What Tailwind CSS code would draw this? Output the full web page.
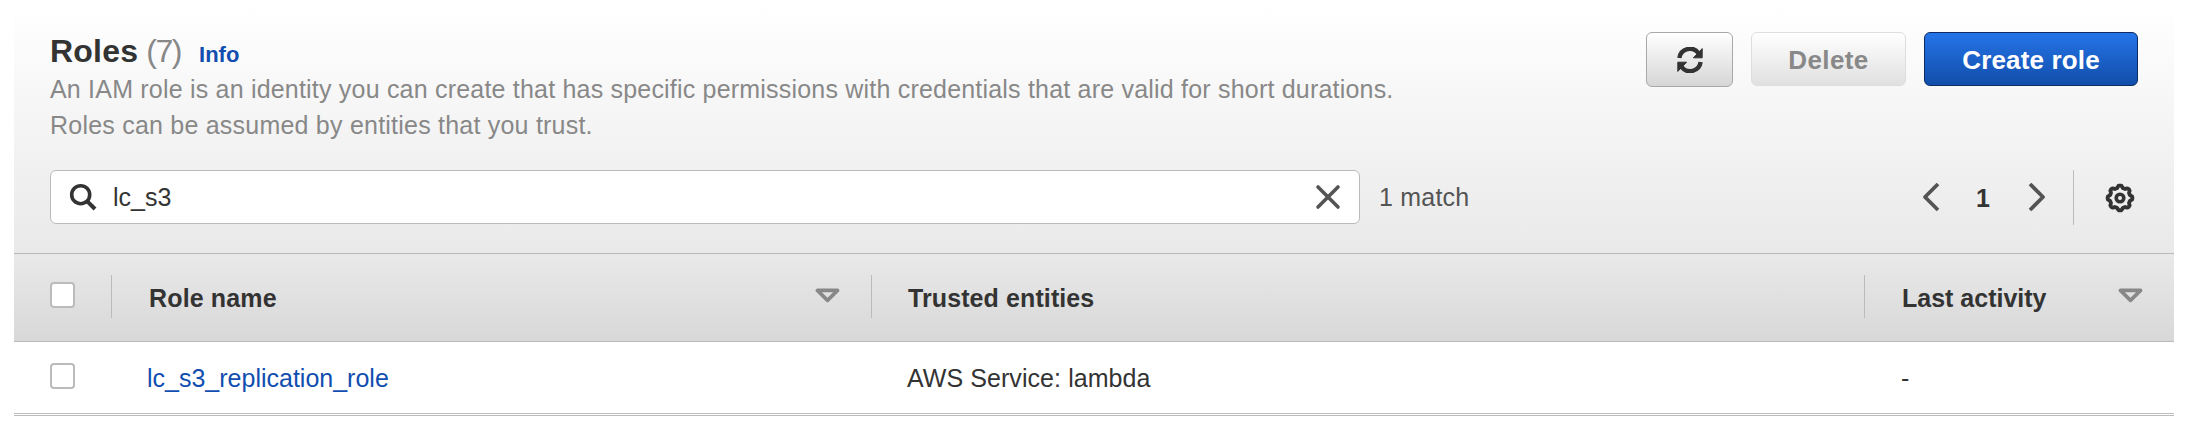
<!DOCTYPE html>
<html lang="en">
<head>
<meta charset="utf-8">
<title>Roles</title>
<script src="https://cdn.jsdelivr.net/npm/@tailwindcss/browser@4"></script>
</head>
<body class="bg-white font-['Liberation_Sans',Arial,sans-serif] text-[25px] leading-9 text-[#333] overflow-hidden">
<main class="mx-auto w-[2160px] mr-[12px] pt-1.5">

  <section class="h-[248px] border-b border-[#bababa] bg-linear-to-b from-white to-[#e9e9e9] flex flex-col">
    <div class="flex justify-between pl-9 pr-9 pt-[25px] h-[164px]">
      <div class="whitespace-nowrap">
        <h1 class="flex items-baseline h-10 text-[32px] leading-10">
          <span class="font-bold tracking-[0.2px]">Roles</span>
          <span class="ml-[8px] text-[#888] tracking-[-1.4px]">(7)</span>
          <a class="ml-[18px] text-[22px] font-bold text-[#114eb0]">Info</a>
        </h1>
        <p class="text-[#888] tracking-[0.2px]">An IAM role is an identity you can create that has specific permissions with credentials that are valid for short durations.</p>
        <p class="text-[#888] tracking-[0.22px]">Roles can be assumed by entities that you trust.</p>
      </div>
      <div class="flex items-start pt-px gap-[18px] font-bold text-[26px]">
        <button class="w-[87px] h-[55px] rounded-md border border-[#a8a8a8] bg-linear-to-b from-white to-[#d6d6d6] flex items-center justify-center" aria-label="Refresh">
          <svg width="26" height="26" viewBox="0 0 26 26" fill="none" stroke="#333" stroke-width="4.4">
            <path d="M2.4 11A10.6 10.6 0 0 1 21.5 6.2"/>
            <path d="M23.6 15A10.6 10.6 0 0 1 4.5 19.8"/>
            <path d="M25.2 1.6V10.8H16.4Z" fill="#333" stroke-width="1"/>
            <path d="M.8 24.4V15.2H9.6Z" fill="#333" stroke-width="1"/>
          </svg>
        </button>
        <button class="w-[155px] h-[54px] pt-px rounded-md border border-[#dedede] bg-linear-to-b from-white to-[#e0e0e0] text-[#888] tracking-[0.4px]">Delete</button>
        <button class="w-[214px] h-[54px] pt-px rounded-md border border-[#0c2c63] bg-linear-to-b from-[#2574e8] to-[#114eaa] text-white tracking-[0.15px]">Create role</button>
      </div>
    </div>
    <div class="flex items-center h-[55px] pl-9 pr-[39px]">
      <div class="w-[1310px] h-[54px] mb-px rounded-md border border-[#bbb] bg-white flex items-center pl-[18px] pr-[18px]">
        <svg width="28" height="28" viewBox="0 0 28 28" fill="none" stroke="#333"><circle cx="11.7" cy="11.7" r="9" stroke-width="3.6"/><path d="M17.8 17.8L26 26" stroke-width="4"/></svg>
        <span class="ml-[16px] flex-1">lc_s3</span>
        <svg width="26" height="26" viewBox="0 0 26 26" fill="none" stroke="#545454" stroke-width="3.6" stroke-linecap="round"><path d="M3 3L23 23M23 3L3 23"/></svg>
      </div>
      <span class="ml-[19px] mb-px tracking-[0.2px] text-[#545454]">1 match</span>
      <div class="ml-auto flex items-center">
        <svg width="18" height="30" viewBox="0 0 18 30" fill="none" stroke="#545454" stroke-width="3.8" stroke-linejoin="round" class="mb-0.5"><path d="M16 2L3 15L16 28"/></svg>
        <span class="ml-[36px] w-[14px] font-bold">1</span>
        <svg width="18" height="30" viewBox="0 0 18 30" fill="none" stroke="#545454" stroke-width="3.8" stroke-linejoin="round" class="ml-[38px] mb-0.5"><path d="M2 2L15 15L2 28"/></svg>
        <div class="ml-[27px] w-px h-[55px] bg-[#bbb]"></div>
        <svg width="30" height="30" viewBox="-15 -15 30 30" fill="none" stroke="#333" class="ml-[31px]">
          <circle r="3.8" stroke-width="3.6"/>
          <path id="gear" stroke-width="3.8" stroke-linejoin="round"/>
        </svg>
      </div>
    </div>
  </section>

  <section class="h-[88px] border-b border-[#bababa] bg-linear-to-b from-[#e9e9e9] to-[#d8d8d8] flex font-bold">
    <div class="w-[98px] h-[43px] mt-[21px] pl-9 pt-[7px] border-r border-[#bbb]"><div class="w-[25px] h-[26px] rounded border-2 border-[#bbb] bg-white"></div></div>
    <div class="w-[760px] h-[43px] mt-[21px] pt-[5px] pl-[37px] pr-[31px] flex border-r border-[#bbb]">
      <span class="flex-1 tracking-[0.15px]">Role name</span>
      <svg width="25" height="16" viewBox="0 0 25 16" fill="none" stroke="#888" stroke-width="3.6" stroke-linejoin="round" class="mt-[8px]"><path d="M2.4 2.4H22.6L12.5 12.4Z"/></svg>
    </div>
    <div class="w-[993px] h-[43px] mt-[21px] pt-[5px] pl-[36px] border-r border-[#bbb] tracking-[0.1px]">Trusted entities</div>
    <div class="flex-1 h-[43px] mt-[21px] pt-[5px] pl-[37px] pr-[31px] flex">
      <span class="flex-1">Last activity</span>
      <svg width="25" height="16" viewBox="0 0 25 16" fill="none" stroke="#888" stroke-width="3.6" stroke-linejoin="round" class="mt-[8px]"><path d="M2.4 2.4H22.6L12.5 12.4Z"/></svg>
    </div>
  </section>

  <section class="h-[74px] border-b border-[#bbb]">
    <div class="h-[72px] border-b border-[#bbb] flex pt-[18px]">
      <div class="w-[98px] pl-9 pt-[3px]"><div class="w-[25px] h-[26px] rounded border-2 border-[#bbb] bg-white"></div></div>
      <a class="w-[760px] pl-[35px] text-[#114eb0]">lc_s3_replication_role</a>
      <span class="w-[993px] pl-[35px] tracking-[0.07px]">AWS Service: lambda</span>
      <span class="pl-[36px]">-</span>
    </div>
  </section>
</main>
<script>
  // Eight-lobed gear outline
  let d = '';
  for (let i = 0; i < 96; i++) {
    const a = i * Math.PI / 48;
    const r = 11.3 + 1.1 * Math.tanh(2.2 * Math.cos(8 * a));
    d += (i ? 'L' : 'M') + (r * Math.cos(a)).toFixed(2) + ' ' + (r * Math.sin(a)).toFixed(2);
  }
  document.getElementById('gear').setAttribute('d', d + 'Z');
</script>
</body>
</html>
